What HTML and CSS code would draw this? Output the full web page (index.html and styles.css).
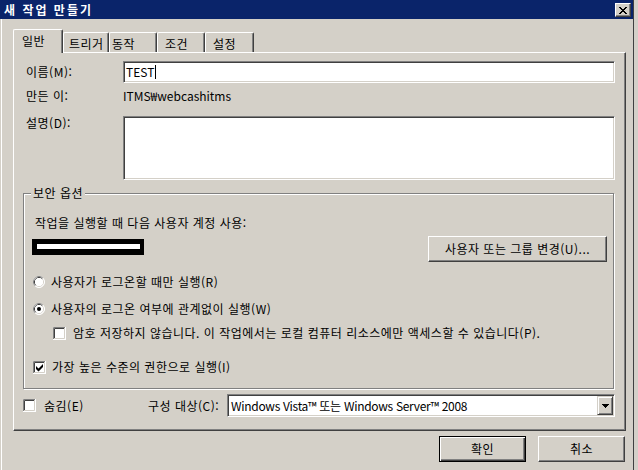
FILE: index.html
```html
<!DOCTYPE html>
<html lang="ko">
<head>
<meta charset="utf-8">
<title>새 작업 만들기</title>
<link rel="stylesheet" href="styles.css">
</head>
<body>
<div class="window">
  <div class="titlebar">
    <span class="title">새 작업 만들기</span>
    <span class="close-btn">
      <svg width="8" height="7" viewBox="0 0 8 7"><path fill="#000" d="M0 0h2v1h-2z M6 0h2v1h-2z M1 1h2v1h-2z M5 1h2v1h-2z M2 2h4v1h-4z M3 3h2v1h-2z M2 4h4v1h-4z M1 5h2v1h-2z M5 5h2v1h-2z M0 6h2v1h-2z M6 6h2v1h-2z"/></svg>
    </span>
  </div>
  <div class="client">
    <div class="tabs">
      <div class="tab selected t1">일반</div>
      <div class="tab t2">트리거</div>
      <div class="tab t3">동작</div>
      <div class="tab t4">조건</div>
      <div class="tab t5">설정</div>
    </div>
    <div class="panel">
      <div class="field-row name-row">
        <span class="label">이름(M):</span>
        <div class="textbox name-box"><span>TEST</span><span class="caret"></span></div>
      </div>
      <div class="field-row creator-row">
        <span class="label">만든 이:</span>
        <span class="value">ITMS₩webcashitms</span>
      </div>
      <div class="field-row desc-row">
        <span class="label">설명(D):</span>
        <div class="textbox desc-box"></div>
      </div>
      <fieldset class="group">
        <legend>보안 옵션</legend>
        <div class="group-body">
          <div class="account-label">작업을 실행할 때 다음 사용자 계정 사용:</div>
          <div class="account-row">
            <div class="redact"><div class="redact-inner"></div></div>
            <div class="button change-btn">사용자 또는 그룹 변경(U)...</div>
          </div>
          <div class="option radio-1">
            <svg class="radio" width="12" height="12" viewBox="0 0 12 12">
              <circle cx="6" cy="6" r="5.5" fill="#fff" stroke="#fff"/>
              <path d="M2.11 9.89 A5.5 5.5 0 0 1 9.89 2.11" fill="none" stroke="#808080"/>
              <circle cx="6" cy="6" r="4.5" fill="#fff" stroke="#D4D0C8"/>
              <path d="M2.82 9.18 A4.5 4.5 0 0 1 9.18 2.82" fill="none" stroke="#404040"/>
              <circle cx="6" cy="6" r="4" fill="#fff"/>
            </svg>
            <span class="opt-text gap6">사용자가 로그온할 때만 실행(R)</span>
          </div>
          <div class="option radio-2">
            <svg class="radio" width="12" height="12" viewBox="0 0 12 12">
              <circle cx="6" cy="6" r="5.5" fill="#fff" stroke="#fff"/>
              <path d="M2.11 9.89 A5.5 5.5 0 0 1 9.89 2.11" fill="none" stroke="#808080"/>
              <circle cx="6" cy="6" r="4.5" fill="#fff" stroke="#D4D0C8"/>
              <path d="M2.82 9.18 A4.5 4.5 0 0 1 9.18 2.82" fill="none" stroke="#404040"/>
              <circle cx="6" cy="6" r="4" fill="#fff"/>
              <circle cx="6" cy="6" r="2" fill="#000"/>
            </svg>
            <span class="opt-text gap6">사용자의 로그온 여부에 관계없이 실행(W)</span>
          </div>
          <div class="option check-pw">
            <svg class="check" width="13" height="13" viewBox="0 0 13 13">
              <rect width="13" height="13" fill="#fff"/>
              <path d="M0 12.5H12.5V0" fill="none" stroke="#fff"/>
              <path d="M1 11.5H11.5V1" fill="none" stroke="#D4D0C8"/>
              <path d="M0.5 12V0.5H12" fill="none" stroke="#808080"/>
              <path d="M1.5 11V1.5H11" fill="none" stroke="#404040"/>
            </svg>
            <span class="opt-text gap7">암호 저장하지 않습니다. 이 작업에서는 로컬 컴퓨터 리소스에만 액세스할 수 있습니다(P).</span>
          </div>
          <div class="option check-high">
            <svg class="check" width="13" height="13" viewBox="0 0 13 13">
              <rect width="13" height="13" fill="#fff"/>
              <path d="M0 12.5H12.5V0" fill="none" stroke="#fff"/>
              <path d="M1 11.5H11.5V1" fill="none" stroke="#D4D0C8"/>
              <path d="M0.5 12V0.5H12" fill="none" stroke="#808080"/>
              <path d="M1.5 11V1.5H11" fill="none" stroke="#404040"/>
              <polygon points="3,5 5.5,7.5 10,3 10,6 5.5,10.5 3,8" fill="#000"/>
            </svg>
            <span class="opt-text gap6">가장 높은 수준의 권한으로 실행(I)</span>
          </div>
        </div>
      </fieldset>
      <div class="bottom-row">
        <div class="hide-wrap">
          <svg class="check" width="13" height="13" viewBox="0 0 13 13">
            <rect width="13" height="13" fill="#fff"/>
            <path d="M0 12.5H12.5V0" fill="none" stroke="#fff"/>
            <path d="M1 11.5H11.5V1" fill="none" stroke="#D4D0C8"/>
            <path d="M0.5 12V0.5H12" fill="none" stroke="#808080"/>
            <path d="M1.5 11V1.5H11" fill="none" stroke="#404040"/>
          </svg>
          <span class="opt-text gap8">숨김(E)</span>
        </div>
        <span class="config-label">구성 대상(C):</span>
        <div class="combo">
          <span class="combo-text">Windows Vista™ 또는 Windows Server™ 2008</span>
          <span class="drop-btn">
            <svg width="7" height="4" viewBox="0 0 7 4"><path d="M0 0h7v1h-7z M1 1h5v1h-5z M2 2h3v1h-3z M3 3h1v1h-1z" fill="#000"/></svg>
          </span>
        </div>
      </div>
    </div>
    <div class="dialog-buttons">
      <div class="button dlg-btn default">확인</div>
      <div class="button dlg-btn">취소</div>
    </div>
  </div>
</div>
</body>
</html>
```
FILE: styles.css
```css
* { box-sizing: border-box; }
html, body { margin: 0; padding: 0; }
body {
  width: 638px;
  height: 470px;
  overflow: hidden;
  background: #D4D0C8;
  font-family: "Noto Sans CJK KR", "Noto Sans", sans-serif;
  font-size: 12px;
  line-height: 14px;
  letter-spacing: 0.5px;
  color: #000;
}
.window {
  width: 634px;
  height: 470px;
  background: #D4D0C8;
  border-right: 1px solid #404040;
}
.titlebar {
  height: 19px;
  background: #0A246A;
  color: #fff;
  display: flex;
  align-items: flex-start;
  justify-content: space-between;
  padding: 0 2px 0 4px;
}
.title {
  font-weight: bold;
  line-height: 19px;
  letter-spacing: 2px;
}
.close-btn {
  width: 16px;
  height: 14px;
  margin-top: 3px;
  background: #D4D0C8;
  border: 1px solid;
  border-color: #fff #404040 #404040 #fff;
  box-shadow: inset -1px -1px #808080;
  display: flex;
  align-items: center;
  justify-content: center;
  padding-right: 1px;
}
.close-btn svg { display: block; }
.client {
  margin-left: 1px;
  border-left: 1px solid #fff;
  padding: 10px 0 0 11px;
  height: 451px;
}
.tabs {
  display: flex;
  align-items: flex-end;
  height: 23px;
}
.tab {
  height: 20px;
  padding-top: 4px;
  border-left: 1px solid #fff;
  border-top: 1px solid #fff;
  border-right: 1px solid #404040;
  box-shadow: inset -1px 0 #808080;
  border-radius: 2px 2px 0 0;
  background: #D4D0C8;
  white-space: nowrap;
}
.tab.selected {
  height: 24px;
  margin-bottom: -1px;
  position: relative;
  z-index: 1;
}
.t1 { width: 50px; padding-left: 8px; }
.t2 { width: 46px; padding-left: 5px; }
.t3 { width: 48px; padding-left: 2px; }
.t4 { width: 48px; padding-left: 7px; }
.t5 { width: 49px; padding-left: 7px; }
.panel {
  width: 613px;
  height: 379px;
  border-left: 1px solid #fff;
  border-top: 1px solid #fff;
  border-right: 1px solid #404040;
  border-bottom: 1px solid #404040;
  box-shadow: inset -1px -1px #808080;
}
.field-row {
  display: flex;
  padding-left: 12px;
}
.label {
  width: 97px;
  flex: none;
}
.value { letter-spacing: 0; }
.name-row {
  margin-top: 8px;
  height: 22px;
  align-items: center;
}
.textbox {
  width: 492px;
  background: #fff;
  border: 1px solid;
  border-color: #808080 #fff #fff #808080;
  box-shadow: inset 1px 1px #404040, inset -1px -1px #D4D0C8;
}
.name-box {
  height: 22px;
  display: flex;
  align-items: center;
  padding-left: 2px;
  letter-spacing: 0;
}
.caret {
  display: inline-block;
  width: 1px;
  height: 14px;
  background: #000;
  margin-left: 1px;
}
.creator-row {
  margin-top: 3px;
  height: 20px;
  align-items: center;
}
.desc-row {
  margin-top: 10px;
  align-items: flex-start;
}
.desc-box { height: 64px; }
.group {
  margin: 6px 0 0 9px;
  padding: 0 0 14px 0;
  width: 591px;
  min-inline-size: 0;
  border: 1px solid #808080;
  box-shadow: inset 1px 1px #fff, 1px 1px #fff;
}
.group legend {
  margin-left: 7px;
  padding: 0 2px;
  line-height: 14px;
  background: #D4D0C8;
}
.group-body {
  display: flex;
  flex-direction: column;
}
.account-label { margin: 16px 0 0 11px; }
.account-row {
  display: flex;
  justify-content: space-between;
  align-items: flex-start;
  margin-top: 6px;
  height: 26px;
  padding: 0 6px 0 8px;
}
.redact {
  width: 112px;
  height: 16px;
  margin-top: 3px;
  background: #000;
  padding: 5px 4px 6px 5px;
}
.redact-inner {
  height: 5px;
  background: #fff;
}
.button {
  background: #D4D0C8;
  border: 1px solid;
  border-color: #fff #404040 #404040 #fff;
  box-shadow: inset -1px -1px #808080;
  display: flex;
  align-items: center;
  justify-content: center;
  white-space: nowrap;
}
.change-btn {
  width: 179px;
  height: 26px;
}
.option {
  display: flex;
  align-items: center;
  height: 14px;
}
.option svg, .hide-wrap svg { display: block; flex: none; }
.radio-1 { margin: 13px 0 0 9px; }
.radio-2 { margin: 13px 0 0 9px; }
.check-pw { margin: 10px 0 0 29px; }
.check-high { margin: 20px 0 0 9px; }
.gap6 { margin-left: 6px; }
.gap7 { margin-left: 7px; }
.gap8 { margin-left: 8px; }
.opt-text { white-space: nowrap; }
.bottom-row {
  display: flex;
  align-items: center;
  height: 23px;
  margin: 5px 0 0 9px;
}
.hide-wrap {
  width: 125px;
  display: flex;
  align-items: center;
}
.config-label { width: 79px; }
.combo {
  width: 388px;
  height: 23px;
  display: flex;
  align-items: stretch;
  background: #fff;
  border: 1px solid;
  border-color: #808080 #fff #fff #808080;
  box-shadow: inset 1px 1px #404040, inset -1px -1px #D4D0C8;
  padding: 1px;
}
.combo-text {
  flex: 1;
  padding-left: 2px;
  display: flex;
  align-items: center;
  white-space: nowrap;
  letter-spacing: -0.3px;
}
.drop-btn {
  width: 16px;
  background: #D4D0C8;
  border: 1px solid;
  border-color: #D4D0C8 #404040 #404040 #D4D0C8;
  box-shadow: inset 1px 1px #fff, inset -1px -1px #808080;
  display: flex;
  align-items: center;
  justify-content: center;
}
.drop-btn svg { display: block; }
.dialog-buttons {
  width: 613px;
  display: flex;
  justify-content: flex-end;
  gap: 12px;
  margin-top: 5px;
  padding-right: 1px;
}
.dlg-btn {
  width: 87px;
  height: 26px;
}
.dlg-btn.default {
  border: 1px solid #000;
  box-shadow: inset 1px 1px #fff, inset -1px -1px #404040, inset -2px -2px #808080;
}
```
